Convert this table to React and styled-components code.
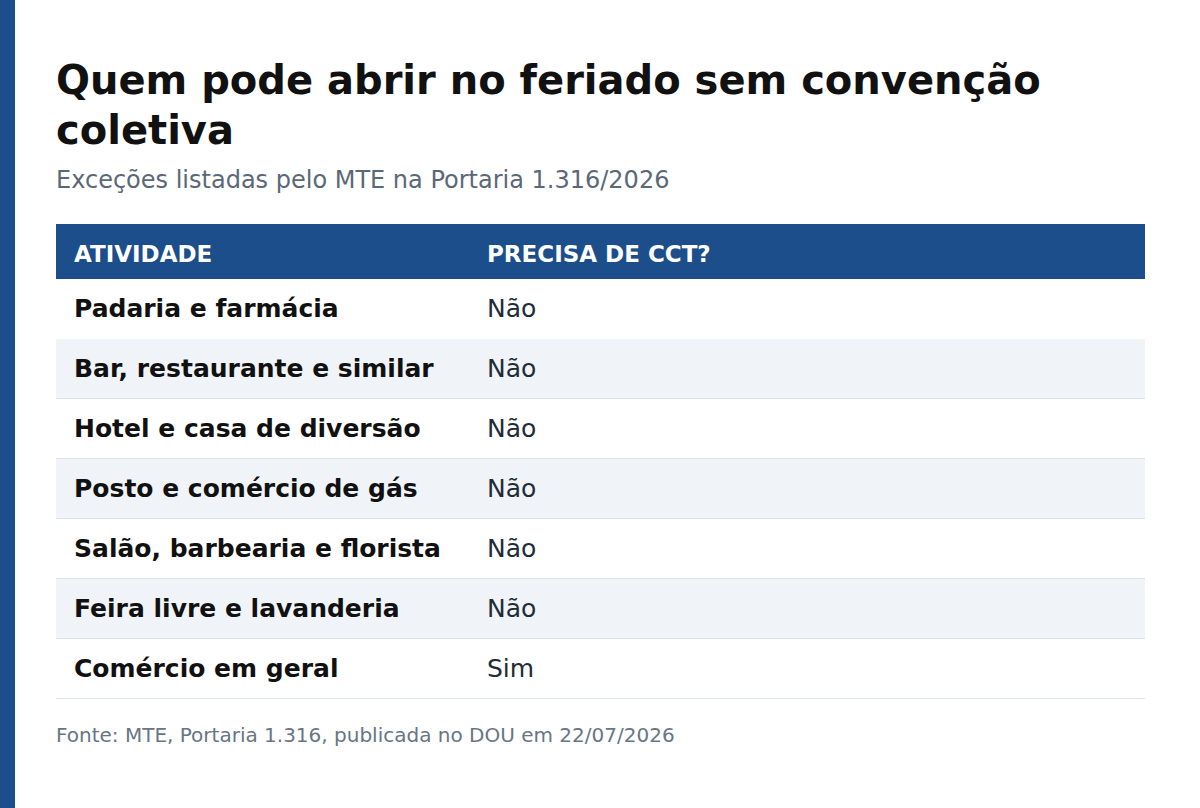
import React from "react";
import styled, { createGlobalStyle } from "styled-components";

const GlobalStyle = createGlobalStyle`
  html, body { margin: 0; padding: 0; background: #ffffff; }
  body { font-family: "DejaVu Sans", "Noto Sans", sans-serif; }
`;

const Page = styled.div`
  display: flex;
  min-height: 808px;
  background: #ffffff;
`;

const SideBar = styled.div`
  width: 15px;
  flex-shrink: 0;
  background: #1c4e8c;
`;

const Content = styled.main`
  flex: 1;
  padding: 55px 55px 40px 41px;
`;

const Title = styled.h1`
  margin: 0;
  font-size: 40px;
  line-height: 50px;
  font-weight: 700;
  color: #111111;
`;

const Subtitle = styled.p`
  margin: 10px 0 0;
  font-size: 24px;
  line-height: 30px;
  color: #5b6878;
`;

const Table = styled.div`
  margin-top: 29px;
  display: grid;
  grid-template-columns: 413px 1fr;
`;

const HeadCell = styled.div`
  background: #1c4e8c;
  color: #ffffff;
  font-size: 23px;
  font-weight: 700;
  height: 55px;
  display: flex;
  align-items: center;
  padding: 4px 18px 0;
  box-sizing: border-box;
`;

const Cell = styled.div`
  height: 60px;
  box-sizing: border-box;
  display: flex;
  align-items: center;
  padding: 0 18px;
  font-size: 25px;
  background: ${(p) => (p.$alt ? "#f0f4f8" : "#ffffff")};
  border-bottom: 1px solid ${(p) => (p.$noBorder ? "transparent" : "#dce3ea")};
  font-weight: ${(p) => (p.$label ? 700 : 400)};
  color: ${(p) => (p.$label ? "#111111" : "#222b36")};
`;

const Source = styled.p`
  margin: 24px 0 0;
  font-size: 20px;
  color: #687584;
`;

const rows = [
  ["Padaria e farmácia", "Não"],
  ["Bar, restaurante e similar", "Não"],
  ["Hotel e casa de diversão", "Não"],
  ["Posto e comércio de gás", "Não"],
  ["Salão, barbearia e florista", "Não"],
  ["Feira livre e lavanderia", "Não"],
  ["Comércio em geral", "Sim"],
];

export default function App() {
  return (
    <>
      <GlobalStyle />
      <Page>
        <SideBar />
        <Content>
          <Title>Quem pode abrir no feriado sem convenção coletiva</Title>
          <Subtitle>Exceções listadas pelo MTE na Portaria 1.316/2026</Subtitle>
          <Table>
            <HeadCell>ATIVIDADE</HeadCell>
            <HeadCell>PRECISA DE CCT?</HeadCell>
            {rows.map(([label, value], i) => (
              <React.Fragment key={label}>
                <Cell $label $alt={i % 2 === 1} $noBorder={i === 0}>{label}</Cell>
                <Cell $alt={i % 2 === 1} $noBorder={i === 0}>{value}</Cell>
              </React.Fragment>
            ))}
          </Table>
          <Source>Fonte: MTE, Portaria 1.316, publicada no DOU em 22/07/2026</Source>
        </Content>
      </Page>
    </>
  );
}
